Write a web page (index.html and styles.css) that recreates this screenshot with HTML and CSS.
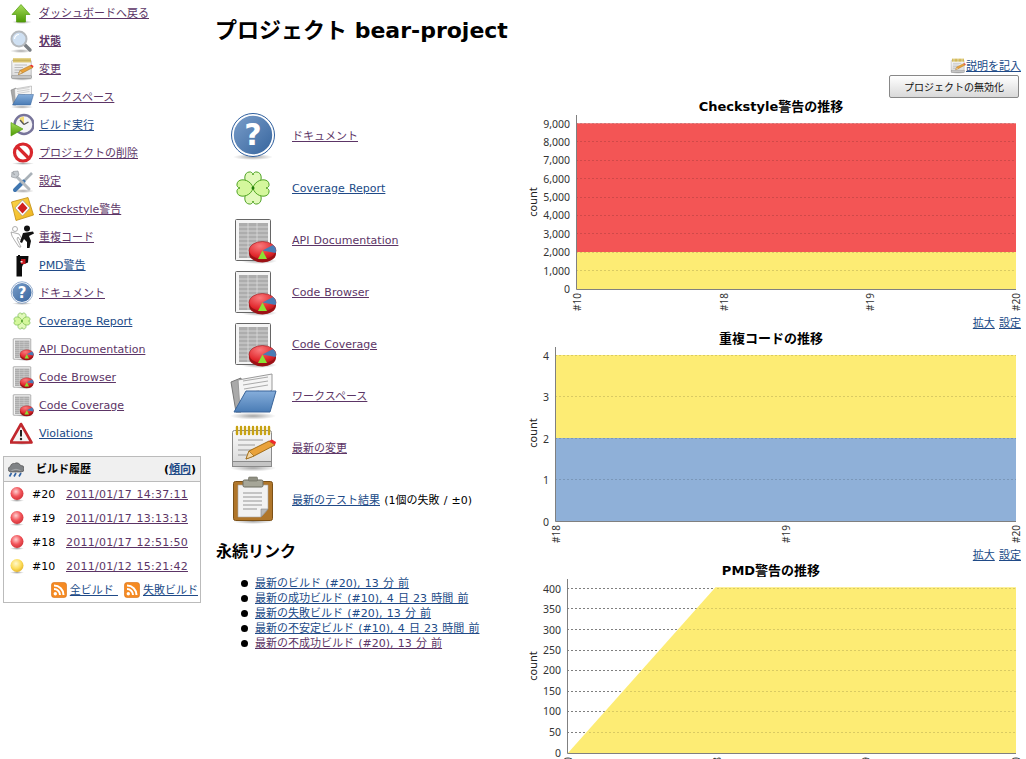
FILE: index.html
```html
<!DOCTYPE html>
<html lang="ja">
<head>
<meta charset="utf-8">
<title>bear-project</title>
<link rel="stylesheet" href="styles.css">
</head>
<body>
<svg class="defs" aria-hidden="true">
  <defs>
    <linearGradient id="gGreen" x1="0" y1="0" x2="0" y2="1"><stop offset="0" stop-color="#a6dc5a"/><stop offset="1" stop-color="#4e9a06"/></linearGradient>
    <linearGradient id="gBlue" x1="0" y1="0" x2="0" y2="1"><stop offset="0" stop-color="#86aedb"/><stop offset="1" stop-color="#4a7cb5"/></linearGradient>
    <linearGradient id="gHelp" x1="0" y1="0" x2="1" y2="1"><stop offset="0" stop-color="#7c9fcb"/><stop offset="1" stop-color="#34639c"/></linearGradient>
    <linearGradient id="gPaper" x1="0" y1="0" x2="0" y2="1"><stop offset="0" stop-color="#fafafa"/><stop offset="1" stop-color="#d8d8d8"/></linearGradient>
    <linearGradient id="gNote" x1="0" y1="0" x2="1" y2="1"><stop offset="0" stop-color="#fbd64a"/><stop offset="1" stop-color="#eeb21f"/></linearGradient>
    <radialGradient id="gRed" cx=".42" cy=".35" r=".75"><stop offset="0" stop-color="#ffd0d0"/><stop offset=".5" stop-color="#f2545a"/><stop offset="1" stop-color="#c6282d"/></radialGradient>
    <radialGradient id="gYel" cx=".42" cy=".35" r=".75"><stop offset="0" stop-color="#fff8cc"/><stop offset=".55" stop-color="#fcdc58"/><stop offset="1" stop-color="#dca51c"/></radialGradient>
    <radialGradient id="gPie" cx=".4" cy=".25" r=".8"><stop offset="0" stop-color="#f97a7c"/><stop offset=".7" stop-color="#e2282d"/><stop offset="1" stop-color="#b5141a"/></radialGradient>
    <radialGradient id="gShadow"><stop offset="0" stop-color="#000" stop-opacity=".35"/><stop offset="1" stop-color="#000" stop-opacity="0"/></radialGradient>

    <symbol id="i-up" viewBox="0 0 24 24">
      <ellipse cx="12" cy="21" rx="10" ry="2" fill="url(#gShadow)"/>
      <path d="M11 3.500 20 13.500H15.500V21H6.500V13.500H2Z" fill="url(#gGreen)" stroke="#4e9a06" stroke-width=".7"/>
    </symbol>
    <symbol id="i-search" viewBox="0 0 24 24">
      <ellipse cx="11" cy="22" rx="11" ry="2" fill="url(#gShadow)"/>
      <path d="M14 15 20 21" stroke="#7a7f84" stroke-width="3.400" stroke-linecap="round"/>
      <circle cx="9" cy="10" r="7.500" fill="#cfe0f2" stroke="#b5b9bd" stroke-width="2"/>
      <path d="M4.500 10a4.500 4.500 0 0 1 4.500-4.500" fill="none" stroke="#fff" stroke-width="1.200"/>
    </symbol>
    <symbol id="i-notes" viewBox="0 0 48 48">
      <ellipse cx="24" cy="44" rx="23" ry="3.500" fill="url(#gShadow)"/>
      <rect x="3.500" y="6.500" width="39" height="36" rx="2" fill="url(#gPaper)" stroke="#8a8a8a"/>
      <rect x="3.500" y="37.500" width="39" height="5" fill="#c5c5c5" stroke="#8a8a8a"/>
      <path d="M8 3v7M12 3v7M16 3v7M20 3v7M24 3v7M28 3v7M32 3v7M36 3v7M40 3v7" stroke="#c7a213" stroke-width="2.400" stroke-linecap="round"/>
      <path d="M9 16H34M9 21H26M9 26H24M9 31H18" stroke="#9a9a9a" stroke-width="1.200"/>
      <path d="M17 35 20 27 40 17 46 21 25 32Z" fill="#e9a23b" stroke="#8f5902" stroke-width=".8"/>
      <path d="M17 35 20 27 25 32Z" fill="#f4d7a6" stroke="#8f5902" stroke-width=".6"/>
      <path d="M40 17 43 15.500 47 18 46 21Z" fill="#ef2929"/>
    </symbol>
    <symbol id="i-folder" viewBox="0 0 48 48">
      <ellipse cx="24" cy="44" rx="23" ry="3.500" fill="url(#gShadow)"/>
      <path d="M2 10 12 6V40H7Z" fill="#a9a9a9" stroke="#777"/>
      <path d="M9 8 43 2V18L17 38H11Z" fill="#f5f5f5" stroke="#999"/>
      <path d="M14 9 39 5M14 13 39 9M15 17 39 13M16 21 30 19" stroke="#aaa"/>
      <path d="M17 19H47L41 40H5Z" fill="url(#gBlue)" stroke="#3a659a"/>
    </symbol>
    <symbol id="i-build" viewBox="0 0 24 24">
      <circle cx="14" cy="11.500" r="9.500" fill="#f4f4f6" stroke="#77749a" stroke-width="2.400"/>
      <path d="M14 11.500 9 5 14 3.500Z" fill="#f5dc74"/>
      <path d="M14 11.500 18.500 9" stroke="#555" stroke-width="1.400"/>
      <path d="M14 11.500 10 7" stroke="#555" stroke-width="1.400"/>
      <path d="M1 9.500 13 16 1 23Z" fill="url(#gGreen)" stroke="#4e9a06" stroke-width=".6"/>
    </symbol>
    <symbol id="i-stop" viewBox="0 0 24 24">
      <ellipse cx="13" cy="22.500" rx="11" ry="1.500" fill="url(#gShadow)"/>
      <circle cx="13" cy="11.500" r="8.500" fill="#fff" stroke="#d8272c" stroke-width="3.200"/>
      <path d="M7 5.500 19 17.500" stroke="#d8272c" stroke-width="3.200"/>
    </symbol>
    <symbol id="i-tools" viewBox="0 0 24 24">
      <ellipse cx="13" cy="22" rx="11" ry="2" fill="url(#gShadow)"/>
      <path d="M22 4 13.500 12.500" stroke="#a9b1b8" stroke-width="2.600"/>
      <path d="M13.500 12.500 5 21" stroke="#3f76b0" stroke-width="4" stroke-linecap="round"/>
      <path d="M6 7 19 20" stroke="#b4b9be" stroke-width="3" stroke-linecap="round"/>
      <path d="M3 2.500 8 2l1 4-3.500 3-4-1 .5-5 2.500 3Z" fill="#c6cbd0" stroke="#8b9096" stroke-width=".6"/>
    </symbol>
    <symbol id="i-check" viewBox="0 0 24 24">
      <path d="M1.500 5 18 0.500 23.500 18 6 23.500Z" fill="url(#gNote)" stroke="#c08d10" stroke-width=".8"/>
      <path d="M12.500 3 20 11 12.500 19 5 11Z" fill="#fff" stroke="#8a8a8a" stroke-width=".6"/>
      <path d="M12.500 5.500 17.500 11 12.500 16.500 7.500 11Z" fill="#d01f1f"/>
    </symbol>
    <symbol id="i-dup" viewBox="0 0 24 24">
      <g fill="#fff" stroke="#9a9a9a" stroke-width=".8">
        <circle cx="5" cy="4" r="2.500"/>
        <path d="M1 7 9 9 12 14 10 15 8 12 7 14 11 22H9L5 16 2 11Z"/>
      </g>
      <g fill="#111">
        <circle cx="17" cy="3.500" r="3"/>
        <path d="M23 6.500 24 8.500 19 11 21 16 19.500 23H17L17 17 14 14 12 18 10 17 13 8Z"/>
      </g>
    </symbol>
    <symbol id="i-pmd" viewBox="0 0 24 24">
      <path d="M6.500 3H8V2H10V3H18.500L18 9.500 13 11.500 12 14V23.500H6.500Z" fill="#0c0c0c"/>
      <rect x="11" y="6" width="4.500" height="5" fill="#c6161c"/>
      <rect x="10.500" y="8" width="2" height="1.500" fill="#f4f4f4"/>
    </symbol>
    <symbol id="i-help" viewBox="0 0 48 48">
      <ellipse cx="24" cy="45" rx="20" ry="3" fill="url(#gShadow)"/>
      <circle cx="24" cy="23" r="20.500" fill="url(#gHelp)" stroke="#fff" stroke-width="2.600"/>
      <circle cx="24" cy="23" r="21.500" fill="none" stroke="#2f5f9e" stroke-width="1"/>
      <text x="24" y="33" class="qmark">?</text>
    </symbol>
    <symbol id="i-clover" viewBox="0 0 48 48">
      <g fill="#d4f79c" stroke="#3f9a12" stroke-width=".9">
        <path d="M24 24C15 22 13 9 20 8 22 7.500 24 9 24 11 24 9 26 7.500 28 8 35 9 33 22 24 24Z" fill-opacity=".7"/>
        <path d="M24 24C15 26 13 39 20 40 22 40.500 24 39 24 37 24 39 26 40.500 28 40 35 39 33 26 24 24Z" fill-opacity=".7"/>
        <path d="M24 24C22 15 9 13 8 20 7.500 22 9 24 11 24 9 24 7.500 26 8 28 9 35 22 33 24 24Z"/>
        <path d="M24 24C26 15 39 13 40 20 40.500 22 39 24 37 24 39 24 40.500 26 40 28 39 35 26 33 24 24Z"/>
      </g>
      <circle cx="24" cy="24" r="1.500" fill="#1f7a0a"/>
    </symbol>
    <symbol id="i-report" viewBox="0 0 48 48">
      <ellipse cx="30" cy="45" rx="18" ry="3" fill="url(#gShadow)"/>
      <rect x="6.500" y="3.500" width="35" height="41" rx="1" fill="#f4f4f4" stroke="#666"/>
      <rect x="10" y="7" width="29" height="35" fill="#adadad"/>
      <path d="M10 11H39M10 15H39M10 19H39M10 23H39M10 27H39M10 31H39M10 35H39M10 39H39M19 7V42M28 7V42" stroke="#dcdcdc" stroke-width=".8"/>
      <ellipse cx="33.500" cy="37.500" rx="13.500" ry="9" fill="#9c1115"/>
      <ellipse cx="33.500" cy="34.500" rx="13.500" ry="9" fill="url(#gPie)" stroke="#9c1115" stroke-width=".6"/>
      <path d="M33.500 34.500 44 29A13.500 9 0 0 1 46.500 37Z" fill="#4a7cb5"/>
      <path d="M33.500 34.500 38 43 29 43Z" fill="#8ae234"/>
    </symbol>
    <symbol id="i-clip" viewBox="0 0 48 48">
      <ellipse cx="24" cy="45.500" rx="20" ry="2.500" fill="url(#gShadow)"/>
      <rect x="4.500" y="5.500" width="39" height="39" rx="2" fill="#b0762a" stroke="#7c5117"/>
      <path d="M9 9H39V33L32 41H9Z" fill="#f2f2f2" stroke="#aaa" stroke-width=".6"/>
      <path d="M32 41V33H39Z" fill="#b9b9b9" stroke="#888" stroke-width=".6"/>
      <path d="M14 17H33M14 21H33M14 25H33M14 29H33M14 33H28" stroke="#b5b5b5" stroke-width="1.400"/>
      <rect x="14" y="4" width="20" height="7" rx="1.500" fill="#a6a698" stroke="#6c6c60"/>
      <rect x="19.500" y="1" width="9" height="4" rx="1" fill="#8f8f82" stroke="#6c6c60" stroke-width=".6"/>
    </symbol>
    <symbol id="i-warn" viewBox="0 0 24 24">
      <ellipse cx="12" cy="22.500" rx="11" ry="1.500" fill="url(#gShadow)"/>
      <path d="M11 3 21.500 21.500H.5Z" fill="#f4f4f4" stroke="#c1272d" stroke-width="2.600" stroke-linejoin="round"/>
      <path d="M11 9V15.500" stroke="#222" stroke-width="2"/>
      <circle cx="11" cy="18" r="1.200" fill="#222"/>
    </symbol>
    <symbol id="i-cloud" viewBox="0 0 16 16">
      <path d="M2.500 11A2.800 2.800 0 0 1 2.500 5.500 3.200 3.200 0 0 1 6.500 2.500 4 4 0 0 1 12.500 4.500 3.200 3.200 0 0 1 13.500 11Z" fill="#7f8285" stroke="#444" stroke-width=".6"/>
      <path d="M3.500 9.500Q8 7 12.500 9.500" fill="none" stroke="#a8abad" stroke-width="1"/>
      <path d="M3.500 12 1.500 15.500M8 12 6 15.500M13 12 11 15.500" stroke="#3465a4" stroke-width="1.700"/>
    </symbol>
    <symbol id="i-red" viewBox="0 0 16 16">
      <ellipse cx="8" cy="14.500" rx="7" ry="1.500" fill="url(#gShadow)"/>
      <circle cx="8" cy="7.500" r="6.500" fill="url(#gRed)"/>
    </symbol>
    <symbol id="i-yellow" viewBox="0 0 16 16">
      <ellipse cx="8" cy="14.500" rx="7" ry="1.500" fill="url(#gShadow)"/>
      <circle cx="8" cy="7.500" r="6.500" fill="url(#gYel)"/>
    </symbol>
    <symbol id="i-rss" viewBox="0 0 16 16">
      <rect x=".5" y=".5" width="15" height="15" rx="2.500" fill="#f58a22" stroke="#d96f10" stroke-width=".6"/>
      <circle cx="4.300" cy="11.700" r="1.700" fill="#fff"/>
      <path d="M3 7A6 6 0 0 1 9 13M3 3.500A9.500 9.500 0 0 1 12.500 13" fill="none" stroke="#fff" stroke-width="2"/>
    </symbol>
  </defs>
</svg>

<div class="page">
  <nav class="side">
    <ul class="tasks">
      <li><svg class="ico24"><use href="#i-up"/></svg><a class="seen" href="#">ダッシュボードへ戻る</a></li>
      <li><svg class="ico24"><use href="#i-search"/></svg><a class="seen current" href="#">状態</a></li>
      <li><svg class="ico24"><use href="#i-notes"/></svg><a class="seen" href="#">変更</a></li>
      <li><svg class="ico24"><use href="#i-folder"/></svg><a class="seen" href="#">ワークスペース</a></li>
      <li><svg class="ico24"><use href="#i-build"/></svg><a href="#">ビルド実行</a></li>
      <li><svg class="ico24"><use href="#i-stop"/></svg><a class="seen" href="#">プロジェクトの削除</a></li>
      <li><svg class="ico24"><use href="#i-tools"/></svg><a class="seen" href="#">設定</a></li>
      <li><svg class="ico24"><use href="#i-check"/></svg><a class="seen" href="#">Checkstyle警告</a></li>
      <li><svg class="ico24"><use href="#i-dup"/></svg><a class="seen" href="#">重複コード</a></li>
      <li><svg class="ico24"><use href="#i-pmd"/></svg><a href="#">PMD警告</a></li>
      <li><svg class="ico24"><use href="#i-help"/></svg><a class="seen" href="#">ドキュメント</a></li>
      <li><svg class="ico24"><use href="#i-clover"/></svg><a href="#">Coverage Report</a></li>
      <li><svg class="ico24"><use href="#i-report"/></svg><a class="seen" href="#">API Documentation</a></li>
      <li><svg class="ico24"><use href="#i-report"/></svg><a class="seen" href="#">Code Browser</a></li>
      <li><svg class="ico24"><use href="#i-report"/></svg><a class="seen" href="#">Code Coverage</a></li>
      <li><svg class="ico24"><use href="#i-warn"/></svg><a href="#">Violations</a></li>
    </ul>

    <section class="history">
      <header class="history-head">
        <svg class="ico16"><use href="#i-cloud"/></svg>
        <span class="history-title">ビルド履歴</span>
        <span class="history-trend">(<a href="#">傾向</a>)</span>
      </header>
      <div class="build"><svg class="ico16"><use href="#i-red"/></svg><span class="num">#20</span><a class="seen" href="#">2011/01/17 14:37:11</a></div>
      <div class="build"><svg class="ico16"><use href="#i-red"/></svg><span class="num">#19</span><a class="seen" href="#">2011/01/17 13:13:13</a></div>
      <div class="build"><svg class="ico16"><use href="#i-red"/></svg><span class="num">#18</span><a class="seen" href="#">2011/01/17 12:51:50</a></div>
      <div class="build"><svg class="ico16"><use href="#i-yellow"/></svg><span class="num">#10</span><a class="seen" href="#">2011/01/12 15:21:42</a></div>
      <div class="feeds">
        <svg class="ico16"><use href="#i-rss"/></svg><a href="#">全ビルド&nbsp;</a>
        <svg class="ico16"><use href="#i-rss"/></svg><a href="#">失敗ビルド</a>
      </div>
    </section>
  </nav>

  <main class="main">
    <h1 class="title">プロジェクト bear-project</h1>
    <div class="columns">
      <div class="left">
        <div class="action"><svg class="ico48"><use href="#i-help"/></svg><a class="seen" href="#">ドキュメント</a></div>
        <div class="action"><svg class="ico48"><use href="#i-clover"/></svg><a href="#">Coverage Report</a></div>
        <div class="action"><svg class="ico48"><use href="#i-report"/></svg><a class="seen" href="#">API Documentation</a></div>
        <div class="action"><svg class="ico48"><use href="#i-report"/></svg><a class="seen" href="#">Code Browser</a></div>
        <div class="action"><svg class="ico48"><use href="#i-report"/></svg><a class="seen" href="#">Code Coverage</a></div>
        <div class="action"><svg class="ico48"><use href="#i-folder"/></svg><a class="seen" href="#">ワークスペース</a></div>
        <div class="action"><svg class="ico48"><use href="#i-notes"/></svg><a class="seen" href="#">最新の変更</a></div>
        <div class="action"><svg class="ico48"><use href="#i-clip"/></svg><span><a href="#">最新のテスト結果</a> (1個の失敗 / ±0)</span></div>
        <h2 class="perma-title">永続リンク</h2>
        <ul class="perma">
          <li><a href="#">最新のビルド (#20), 13 分 前</a></li>
          <li><a href="#">最新の成功ビルド (#10), 4 日 23 時間 前</a></li>
          <li><a href="#">最新の失敗ビルド (#20), 13 分 前</a></li>
          <li><a href="#">最新の不安定ビルド (#10), 4 日 23 時間 前</a></li>
          <li><a class="seen" href="#">最新の不成功ビルド (#20), 13 分 前</a></li>
        </ul>
      </div>

      <div class="right">
        <div class="describe"><svg class="ico16"><use href="#i-notes"/></svg><a href="#">説明を記入</a></div>
        <div class="disable"><button class="disable-btn" type="button">プロジェクトの無効化</button></div>

        <figure class="trend">
          <svg class="chart" viewBox="0 0 500 216">
            <text class="c-title" x="250" y="12">Checkstyle警告の推移</text>
            <rect class="f-red" x="55.500" y="24.300" width="439.500" height="166"/>
            <rect class="f-yel" x="55.500" y="153" width="439.500" height="37.300"/>
            <path class="c-grid" d="M55 24.500H495M55 42.500H495M55 61.500H495M55 79.500H495M55 98.500H495M55 116.500H495M55 134.500H495M55 153.500H495M55 171.500H495"/>
            <path class="c-axis" d="M55.500 16V190.500H495"/>
            <g class="c-y">
              <text x="49" y="29">9,000</text><text x="49" y="47">8,000</text><text x="49" y="65">7,000</text><text x="49" y="84">6,000</text><text x="49" y="102">5,000</text><text x="49" y="120">4,000</text><text x="49" y="139">3,000</text><text x="49" y="157">2,000</text><text x="49" y="176">1,000</text><text x="49" y="194">0</text>
            </g>
            <text class="c-count" transform="rotate(-90 15.500 103)" x="15.500" y="103">count</text>
            <g class="c-x">
              <text transform="rotate(-90 59.500 194)" x="59.500" y="194">#10</text>
              <text transform="rotate(-90 207 194)" x="207" y="194">#18</text>
              <text transform="rotate(-90 352.500 194)" x="352.500" y="194">#19</text>
              <text transform="rotate(-90 498.500 194)" x="498.500" y="194">#20</text>
            </g>
          </svg>
          <figcaption class="trend-links"><a href="#">拡大</a> <a href="#">設定</a></figcaption>
        </figure>

        <figure class="trend">
          <svg class="chart" viewBox="0 0 500 216">
            <text class="c-title" x="250" y="12">重複コードの推移</text>
            <rect class="f-yel" x="34.500" y="24" width="460.500" height="83"/>
            <rect class="f-blue" x="34.500" y="107" width="460.500" height="83.500"/>
            <path class="c-grid" d="M34 24.500H495M34 65.500H495M34 107.500H495M34 148.500H495"/>
            <path class="c-axis" d="M34.500 16V190.500H495"/>
            <g class="c-y">
              <text x="28" y="29">4</text><text x="28" y="70">3</text><text x="28" y="112">2</text><text x="28" y="153">1</text><text x="28" y="195">0</text>
            </g>
            <text class="c-count" transform="rotate(-90 15.500 102)" x="15.500" y="102">count</text>
            <g class="c-x">
              <text transform="rotate(-90 39 194)" x="39" y="194">#18</text>
              <text transform="rotate(-90 268.500 194)" x="268.500" y="194">#19</text>
              <text transform="rotate(-90 498.500 194)" x="498.500" y="194">#20</text>
            </g>
          </svg>
          <figcaption class="trend-links"><a href="#">拡大</a> <a href="#">設定</a></figcaption>
        </figure>

        <figure class="trend">
          <svg class="chart" viewBox="0 0 500 216">
            <text class="c-title" x="250" y="12">PMD警告の推移</text>
            <path class="c-grid-under" d="M46 25.500H495M46 45.500H495M46 66.500H495M46 87.500H495M46 107.500H495M46 128.500H495M46 148.500H495M46 169.500H495"/>
            <path class="f-yel" d="M46.500 190.500 194.500 24.300H495V190.500Z"/>
            <path class="c-grid" d="M196 25.500H495M178 45.500H495M160 66.500H495M141 87.500H495M123 107.500H495M105 128.500H495M87 148.500H495M68 169.500H495"/>
            <path class="c-axis" d="M46.500 16V190.500H495"/>
            <g class="c-y">
              <text x="40" y="30">400</text><text x="40" y="50">350</text><text x="40" y="71">300</text><text x="40" y="91">250</text><text x="40" y="111">200</text><text x="40" y="132">150</text><text x="40" y="152">100</text><text x="40" y="173">50</text><text x="40" y="194">0</text>
            </g>
            <text class="c-count" transform="rotate(-90 15.500 103)" x="15.500" y="103">count</text>
            <g class="c-x">
              <text transform="rotate(-90 50.500 194)" x="50.500" y="194">#10</text>
              <text transform="rotate(-90 199.500 194)" x="199.500" y="194">#18</text>
              <text transform="rotate(-90 349 194)" x="349" y="194">#19</text>
              <text transform="rotate(-90 498.500 194)" x="498.500" y="194">#20</text>
            </g>
          </svg>
        </figure>
      </div>
    </div>
  </main>
</div>
</body>
</html>
```

FILE: styles.css
```css
html, body {
  margin: 0;
  height: 759px;
  overflow: hidden;
  background: #fff;
}
body {
  font-family: "DejaVu Sans", "Noto Sans CJK JP", sans-serif;
  font-size: 11px;
  line-height: 15px;
  word-spacing: .7px;
  color: #000;
}
a { color: #204a87; }
a.seen { color: #5c3566; }
.defs { position: absolute; width: 0; height: 0; }
.ico16 { width: 16px; height: 16px; flex: none; }
.ico24 { width: 24px; height: 24px; flex: none; }
.ico48 { width: 48px; height: 48px; flex: none; }
.qmark {
  font-family: "DejaVu Sans", sans-serif;
  font-size: 30px;
  font-weight: bold;
  fill: #fff;
  text-anchor: middle;
}

.page { display: flex; align-items: flex-start; }

/* sidebar */
.side { width: 204px; flex: none; }
.tasks { list-style: none; margin: -1px 0 0; padding: 0; }
.tasks li {
  display: flex;
  align-items: center;
  gap: 5px;
  height: 28px;
  padding-left: 10px;
}
.current { font-weight: bold; }

.history {
  margin: 9px 0 0 3px;
  width: 198px;
  box-sizing: border-box;
  border: 1px solid #bbb;
}
.history-head {
  display: flex;
  align-items: center;
  height: 24px;
  padding: 0 4px 0 4px;
  background: #f0f0f0;
  border-bottom: 1px solid #bbb;
  font-weight: bold;
}
.history-title { margin-left: 12px; flex: 1; }
.history-trend a { font-weight: bold; }
.build {
  display: flex;
  align-items: center;
  height: 24px;
  padding-left: 5px;
}
.build .num { width: 34px; margin-left: 7px; }
.build a { letter-spacing: .26px; }
.feeds {
  display: flex;
  justify-content: flex-end;
  align-items: center;
  gap: 3px;
  height: 24px;
  padding-right: 2px;
}
.feeds a + svg { margin-left: 3px; }

/* main */
.main { flex: 1; min-width: 0; padding: 0 5px 0 12px; }
.title {
  margin: 16px 0 12px -1px;
  font-size: 22px;
  line-height: 30px;
  font-weight: bold;
  word-spacing: 0;
}
.columns { display: flex; justify-content: space-between; }
.left { width: 305px; padding-top: 52px; }
.right { width: 500px; }
.action {
  display: flex;
  align-items: center;
  gap: 15px;
  height: 52px;
  padding-left: 13px;
}
.perma-title {
  margin: 16px 0 0;
  font-size: 16px;
  line-height: 20px;
  font-weight: bold;
}
.perma { list-style: none; margin: 14px 0 0; padding: 0 0 0 25px; }
.perma li {
  display: flex;
  align-items: center;
  gap: 7px;
  height: 15px;
}
.perma li::before {
  content: "";
  width: 7px;
  height: 7px;
  border-radius: 50%;
  background: #000;
}

.describe {
  display: flex;
  justify-content: flex-end;
  align-items: center;
  height: 16px;
}
.disable { display: flex; justify-content: flex-end; margin-top: 1px; padding-right: 2px; }
.disable-btn {
  width: 130px;
  height: 23px;
  padding: 0;
  font-family: inherit;
  font-size: 10px;
  color: #111;
  background: linear-gradient(#fff, #d9d9d9);
  border: 1px solid #888;
  border-radius: 2px;
}
.trend { margin: 1px 0 0; }
.trend + .trend { margin-top: 0; }
.chart { display: block; width: 500px; height: 216px; overflow: visible; }
.trend-links { height: 16px; line-height: 17px; text-align: right; }

.c-title {
  font-family: "DejaVu Sans", "Noto Sans CJK JP", sans-serif;
  font-size: 13px;
  font-weight: bold;
  text-anchor: middle;
}
.f-red { fill: #f35555; }
.f-yel { fill: #fdec74; }
.f-blue { fill: #8fb0d8; }
.c-grid { fill: none; stroke: #000; stroke-opacity: .14; stroke-dasharray: 2 2; }
.c-grid-under { fill: none; stroke: #000; stroke-opacity: .5; stroke-dasharray: 2 2; }
.c-axis { fill: none; stroke: #808080; stroke-width: 1; }
.c-y text, .c-x text {
  font-family: "Noto Sans", sans-serif;
  font-size: 10.500px;
  fill: #333;
}
.c-y text { text-anchor: end; }
.c-x text { text-anchor: end; font-size: 10px; }
.c-count {
  font-family: "Noto Sans", sans-serif;
  font-size: 11px;
  fill: #222;
  text-anchor: middle;
}
```
